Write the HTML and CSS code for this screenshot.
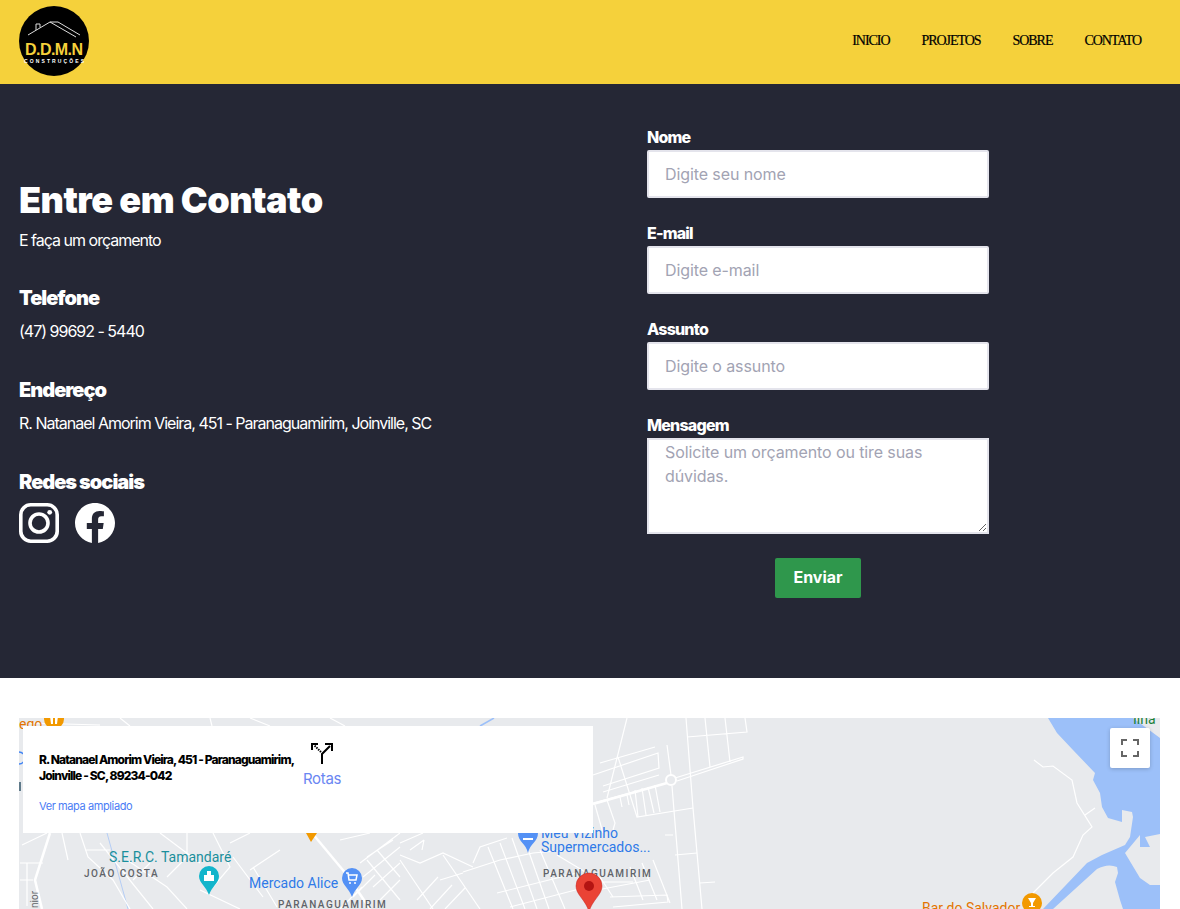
FILE: index.html
```html
<!DOCTYPE html>
<html lang="pt-BR">
<head>
    <meta charset="UTF-8">
    <meta name="viewport" content="width=device-width, initial-scale=1.0">
    <title>D.D.M.N Construções - Contato</title>
    <link rel="stylesheet" href="styles.css">
</head>
<body>
    <header class="site-header">
        <a class="logo" href="#">
            <svg width="70" height="70" viewBox="0 0 70 70">
                <circle cx="35" cy="35" r="35" fill="#000"/>
                <path d="M9 29 L31 16 L57 31 M31 16 H39 L61 29 M17 24 V18 H21 V21.500" fill="none" stroke="#ddd" stroke-width="1"/>
                <text class="logo-name" x="35" y="49" textLength="58" lengthAdjust="spacing" text-anchor="middle">D.D.M.N</text>
                <text class="logo-sub" x="35" y="57" textLength="60" lengthAdjust="spacing" text-anchor="middle">CONSTRUÇÕES</text>
            </svg>
        </a>
        <nav class="site-nav">
            <a href="#">INICIO</a>
            <a href="#">PROJETOS</a>
            <a href="#">SOBRE</a>
            <a href="#">CONTATO</a>
        </nav>
    </header>

    <section class="contact">
        <div class="contact-info">
            <h1 class="contact-title">Entre em Contato</h1>
            <p class="contact-lead">E faça um orçamento</p>

            <h2 class="info-title">Telefone</h2>
            <p class="info-text">(47) 99692 - 5440</p>

            <h2 class="info-title">Endereço</h2>
            <p class="info-text">R. Natanael Amorim Vieira, 451 - Paranaguamirim, Joinville, SC</p>

            <h2 class="info-title">Redes sociais</h2>
            <div class="social">
                <a href="#" aria-label="Instagram">
                    <svg width="40" height="40" viewBox="0 0 40 40">
                        <rect x="1.800" y="1.800" width="36.400" height="36.400" rx="10" fill="none" stroke="#fff" stroke-width="3.600"/>
                        <circle cx="20" cy="20" r="9" fill="none" stroke="#fff" stroke-width="3.600"/>
                        <circle cx="30.700" cy="9.300" r="2.400" fill="#fff"/>
                    </svg>
                </a>
                <a href="#" aria-label="Facebook">
                    <svg width="40" height="40" viewBox="0 0 24 24">
                        <path fill="#fff" d="M24 12.073c0-6.627-5.373-12-12-12s-12 5.373-12 12c0 5.99 4.388 10.954 10.125 11.854v-8.385H7.078v-3.47h3.047V9.43c0-3.007 1.792-4.669 4.533-4.669 1.312 0 2.686.235 2.686.235v2.953H15.83c-1.491 0-1.956.925-1.956 1.874v2.25h3.328l-.532 3.47h-2.796v8.385C19.612 23.027 24 18.062 24 12.073z"/>
                    </svg>
                </a>
            </div>
        </div>

        <form class="contact-form">
            <div class="form-group">
                <label class="form-label" for="nome">Nome</label>
                <input class="form-input" id="nome" type="text" placeholder="Digite seu nome">
            </div>
            <div class="form-group">
                <label class="form-label" for="email">E-mail</label>
                <input class="form-input" id="email" type="text" placeholder="Digite e-mail">
            </div>
            <div class="form-group">
                <label class="form-label" for="assunto">Assunto</label>
                <input class="form-input" id="assunto" type="text" placeholder="Digite o assunto">
            </div>
            <div class="form-group">
                <label class="form-label" for="mensagem">Mensagem</label>
                <textarea class="form-input form-textarea" id="mensagem" placeholder="Solicite um orçamento ou tire suas dúvidas."></textarea>
            </div>
            <button class="form-button" type="button">Enviar</button>
        </form>
    </section>

    <section class="map-section">
        <div class="map">
            <svg class="map-canvas" width="1141" height="191" viewBox="19 718 1141 191">
                <rect x="19" y="718" width="1141" height="191" fill="#e8eaed"/>

                <!-- agua -->
                <path fill="#9cc0f9" d="M1048 718 L1057 733 L1073 750 L1095 773 L1093 780 L1100 793 L1102 807 L1108 818 L1122 822 L1122 810 L1132 812 L1133 817 L1130 837 L1125 845 L1102 855 L1087 863 L1043 909 H1160 V738 L1133 718 Z"/>
                <path fill="#e8eaed" d="M1053 909 L1097 869 Q1108 863 1117 867 L1118 873 L1115 882 L1120 900 L1123 909 Z"/>
                <path fill="#e8eaed" d="M1125 853 L1140 835 L1140 847 L1150 847 L1145 837 L1160 834 V885 H1150 L1140 878 Z"/>
                <path fill="none" stroke="#9cc0f9" stroke-width="1.500" d="M480 726 L494 718"/>
                <path fill="none" stroke="#b4cdf5" stroke-width="1" d="M107 833 L128 909"/>

                <!-- ruas -->
                <g fill="none" stroke="#fff" stroke-width="1.200">
                    <path d="M1034 760 L1043 767 L1053 766 L1072 780 L1077 803 L1092 827 L1083 835 L1073 857 L1053 873 L1033 893 M1085 815 L1095 808"/>
                    <path d="M686 718 L693 808 L702 909 M705 718 L710 767 M725 718 L730 762 M745 718 L747 732 L687 737"/>
                    <path d="M627 718 L607 798 M618 757 L637 817 L693 808"/>
                    <path d="M600 763 L655 747 M593 775 L658 753 L659 768 L603 786 M603 792 L659 775"/>
                    <path d="M593 803 L667 783 M675 778 L743 757 L743 759 L677 781"/>
                    <path d="M667 745 L671 775 M672 786 L682 909"/>
                    <path d="M642 788 L646 815 M648 787 L654 813 M655 785 L660 812 M635 790 L638 817"/>
                    <path d="M665 835 L673 835 M675 855 L697 853 M700 883 L715 882"/>
                    <path d="M595 805 L603 833 M607 800 L615 823 L613 830 M620 797 L622 807 M627 795 L629 805"/>
                    <path d="M463 872 L500 860 L533 853 L567 850"/>
                    <path d="M488 847 L513 909 M500 843 L525 909 M512 838 L537 909 M524 838 L549 909 M540 850 L565 909"/>
                    <path d="M497 893 L577 873 M510 907 L587 887 M610 897 L667 895 L668 902 L613 907 M597 890 L650 880"/>
                    <path d="M557 855 L587 873 M600 877 L613 897 M653 860 L670 903 M642 863 L657 900 M630 867 L643 900 M600 882 L633 882"/>
                    <path d="M473 863 L480 847 L507 838 M400 855 L420 863 L443 853 L473 867"/>
                    <path d="M400 843 L423 833 M410 850 L424 840 M424 840 L422 850"/>
                    <path d="M443 855 L480 909 M400 860 L433 909 M417 900 L438 877 M430 909 L452 885 M445 909 L465 888 M440 880 L463 873"/>
                    <path d="M20 863 L43 863 M27 863 L27 906 M20 880 L33 880 M22 845 L47 833"/>
                    <path d="M80 833 L88 857 L113 880 L130 909 M100 843 L153 909 M85 850 L110 850 M62 833 L68 860"/>
                    <path d="M213 833 L220 847 L230 867 L213 887 M160 833 L200 863 M127 860 L167 887 L187 909 M187 833 L187 857 L167 877 M133 880 L150 863"/>
                    <path d="M230 843 L250 833 M233 857 L263 897 M253 867 L277 907 M280 850 L250 870 M200 890 L240 909"/>
                    <path d="M360 863 L400 833 M367 857 L393 840 M400 847 L363 877 M400 863 L373 887 M400 880 L380 900 M367 860 L400 900 M377 850 L400 877 M340 840 L370 833"/>
                    <path d="M353 897 L375 875 M340 909 L362 887"/>
                    <path d="M30 723 L100 725 M120 718 L130 726 M250 718 L270 726 M330 718 L345 726 M210 718 L212 726"/>
                </g>
                <g fill="none" stroke="#fff" stroke-width="2.500">
                    <path d="M312 833 L347 875 L370 909"/>
                    <path d="M50 833 L35 880 L42 909"/>
                    <path d="M593 804 L667 783"/>
                </g>
                <circle cx="671" cy="780" r="5" fill="#e8eaed" stroke="#fff" stroke-width="2"/>

                <!-- lugares -->
                <text class="map-label map-orange" x="19" y="729">ego</text>
                <circle cx="54" cy="719" r="10" fill="#f29900"/>
                <path d="M50 716 L51 724 H53 V716 M55 716 V724 H57 L58 716" fill="#fff"/>
                <path d="M19 752 a6 6 0 0 1 0 12" fill="none" stroke="#4285f4" stroke-width="1.500"/>
                <rect x="19" y="782" width="2" height="9" fill="#5f7a8a"/>
                <path d="M306 833 H317 L311 842 Z" fill="#f29900"/>
                <text class="map-label map-teal" x="109" y="862">S.E.R.C. Tamandaré</text>
                <path d="M209 866 a10 10 0 0 1 10 10 c0 7 -7 10 -10 19 c-3 -9 -10 -12 -10 -19 a10 10 0 0 1 10 -10 z" fill="#12b5cb"/>
                <path d="M204 881 V875 H207 V871 H211 V875 H214 V881 Z" fill="#fff"/>
                <text class="map-area" x="84" y="877">JOÃO COSTA</text>
                <text class="map-label map-blue" x="249" y="888">Mercado Alice</text>
                <path d="M352 868 a10 10 0 0 1 10 10 c0 7 -7 10 -10 19 c-3 -9 -10 -12 -10 -19 a10 10 0 0 1 10 -10 z" fill="#5491f5"/>
                <path d="M346 873 h2 l1 7 h7 l1 -5 h-8" fill="none" stroke="#fff" stroke-width="1.500"/>
                <circle cx="350" cy="883" r="1" fill="#fff"/>
                <circle cx="355" cy="883" r="1" fill="#fff"/>
                <text class="map-area" x="278" y="908">PARANAGUAMIRIM</text>
                <text class="map-small" transform="translate(38 908) rotate(-90)">nior</text>
                <path d="M518 833 H538 c0 9 -8 10 -10 20 c-2 -10 -10 -11 -10 -20 z" fill="#5491f5"/>
                <path d="M523 838 h10 v2 h-10 z" fill="#fff"/>
                <text class="map-label map-blue" x="541" y="838">Meu Vizinho</text>
                <text class="map-label map-blue" x="541" y="852">Supermercados...</text>
                <text class="map-area" x="543" y="877">PARANAGUAMIRIM</text>
                <path d="M589 873 a13 13 0 0 1 13 13 c0 9 -10 14 -13 26 c-3 -12 -13 -17 -13 -26 a13 13 0 0 1 13 -13 z" fill="#ea4335" stroke="#c5221f" stroke-width=".5"/>
                <circle cx="589" cy="886" r="5" fill="#b31412"/>
                <text class="map-label map-orange" x="922" y="913">Bar do Salvador</text>
                <circle cx="1032" cy="903" r="10" fill="#f29900"/>
                <path d="M1028 898 h8 l-3 5 v3 h2 v1 h-6 v-1 h2 v-3 z" fill="#fff"/>
                <text class="map-label map-green" x="1133" y="724">Ilha</text>
            </svg>

            <div class="map-card">
                <div class="map-place">
                    <p class="map-address">R. Natanael Amorim Vieira, 451 - Paranaguamirim, Joinville - SC, 89234-042</p>
                    <a class="map-link" href="#">Ver mapa ampliado</a>
                </div>
                <a class="map-route" href="#">
                    <svg width="22" height="22" viewBox="0 0 22 22">
                        <path d="M11 22 V12 L19 4" fill="none" stroke="#000" stroke-width="2"/>
                        <path d="M14 2 H21 V9" fill="none" stroke="#000" stroke-width="2"/>
                        <path d="M10 10 L3 3" fill="none" stroke="#000" stroke-width="2" stroke-dasharray="1.500 1"/>
                        <path d="M0 8 V1 H7 V3 H2 V8 Z" fill="#000"/>
                    </svg>
                    <span>Rotas</span>
                </a>
            </div>

            <button class="map-fullscreen" type="button" aria-label="Tela cheia">
                <svg width="18" height="18" viewBox="0 0 18 18">
                    <path d="M1 6 V1 H6 M12 1 H17 V6 M17 12 V17 H12 M6 17 H1 V12" fill="none" stroke="#666" stroke-width="2"/>
                </svg>
            </button>
        </div>
    </section>
</body>
</html>
```

FILE: styles.css
```css
* {
    margin: 0;
    padding: 0;
    box-sizing: border-box;
}

html, body {
    height: 909px;
    overflow: hidden;
}

body {
    font-family: Inter, "Noto Sans", sans-serif;
    background: white;
    color: white;
}

a {
    text-decoration: none;
}

.site-header {
    height: 84px;
    background: #f5d13b;
    display: flex;
    align-items: center;
    justify-content: space-between;
    padding: 0 39px 3px 19px;
}

.logo {
    display: block;
    height: 70px;
}

.logo-name {
    font-family: "Liberation Sans", sans-serif;
    font-size: 16px;
    font-weight: 700;
    fill: #f5d13b;
}

.logo-sub {
    font-family: "Liberation Sans", sans-serif;
    font-size: 5px;
    font-weight: 700;
    fill: #fff;
}

.site-nav {
    display: flex;
    gap: 32px;
}

.site-nav a {
    font-family: "Liberation Serif", serif;
    font-size: 14px;
    color: #000;
    letter-spacing: -1.05px;
    -webkit-text-stroke: 0.2px #000;
}

.contact {
    height: 594px;
    background: #252735;
    display: flex;
    padding: 41px 0 0 19px;
}

.contact-info {
    width: 628px;
    padding-top: 53px;
}

.contact-title {
    font-size: 36px;
    font-weight: 900;
    line-height: 44px;
    letter-spacing: -0.5px;
}

.contact-lead {
    font-size: 16px;
    line-height: 24px;
    margin-top: 6px;
    margin-bottom: 34px;
    letter-spacing: -1px;
}

.info-title {
    font-size: 20px;
    font-weight: 900;
    line-height: 24px;
    letter-spacing: -1px;
    margin-bottom: 9px;
}

.info-text {
    font-size: 16px;
    line-height: 24px;
    letter-spacing: -1px;
    margin-bottom: 35px;
}

.social {
    display: flex;
    gap: 16px;
    margin-top: 3px;
}

.social a {
    display: block;
    height: 40px;
}

.contact-form {
    width: 342px;
    display: flex;
    flex-direction: column;
}

.form-group {
    margin-bottom: 23px;
}

.form-label {
    display: block;
    margin-bottom: 1px;
    font-size: 16px;
    font-weight: 800;
    line-height: 24px;
    letter-spacing: -0.8px;
}

.form-input {
    display: block;
    width: 100%;
    height: 48px;
    padding: 0 16px;
    border: 2px solid #e4e4ec;
    border-radius: 2px;
    background: white;
    font-family: Inter, "Noto Sans", sans-serif;
    font-size: 16px;
    line-height: 24px;
    letter-spacing: -0.1px;
    color: #333;
}

.form-input::placeholder {
    color: #a2a3b3;
    opacity: 1;
}

.form-textarea {
    height: 96px;
    border-radius: 0;
}

.form-button {
    align-self: center;
    width: 86px;
    height: 40px;
    margin-top: 1px;
    padding-bottom: 2px;
    border: none;
    border-radius: 2px;
    background: #2f974c;
    color: white;
    font-family: Inter, "Noto Sans", sans-serif;
    font-size: 16px;
    font-weight: 700;
}

.map-section {
    height: 231px;
    padding: 40px 20px 0 19px;
}

.map {
    position: relative;
    height: 191px;
    overflow: hidden;
}

.map-canvas {
    display: block;
}

.map-label {
    font-family: Roboto, sans-serif;
    font-size: 14px;
}

.map-orange { fill: #e37400; }
.map-teal { fill: #1a8f9c; }
.map-blue { fill: #2f7ae8; }
.map-green { fill: #188038; }

.map-area {
    font-family: Roboto, sans-serif;
    font-size: 10px;
    font-weight: 500;
    letter-spacing: 1.5px;
    fill: #5f6368;
}

.map-small {
    font-family: Roboto, sans-serif;
    font-size: 10px;
    fill: #5f6368;
}

.map-card {
    position: absolute;
    left: 4px;
    top: 8px;
    width: 570px;
    height: 107px;
    background: white;
    display: flex;
    padding: 16px;
    color: black;
}

.map-place {
    width: 262px;
    padding-top: 10px;
}

.map-address {
    font-size: 12px;
    font-weight: 800;
    line-height: 16px;
    letter-spacing: -0.85px;
}

.map-link {
    display: block;
    margin-top: 14px;
    font-size: 11px;
    line-height: 16px;
    letter-spacing: -0.4px;
    color: #4a7cf5;
}

.map-route {
    display: flex;
    flex-direction: column;
    align-items: center;
    width: 42px;
    font-size: 15px;
    line-height: 20px;
    letter-spacing: -0.3px;
    color: #6a86f2;
}

.map-route span {
    margin-top: 5px;
}

.map-fullscreen {
    position: absolute;
    right: 10px;
    top: 10px;
    width: 40px;
    height: 40px;
    border: none;
    border-radius: 2px;
    background: white;
    box-shadow: 0 1px 4px rgba(0, 0, 0, 0.2);
    display: flex;
    align-items: center;
    justify-content: center;
}
```
